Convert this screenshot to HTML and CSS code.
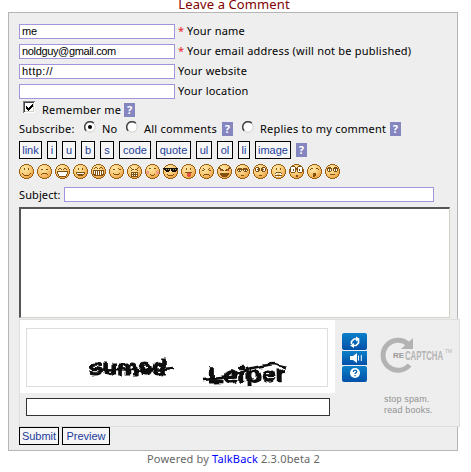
FILE: index.html
```html
<!DOCTYPE html>
<html lang="en">
<head>
<meta charset="utf-8">
<title>Leave a Comment</title>
<link rel="stylesheet" href="styles.css">
</head>
<body>
<svg class="defs" width="0" height="0">
  <defs>
    <radialGradient id="skin" cx=".38" cy=".3" r=".75"><stop offset="0" stop-color="#ffe9aa"/><stop offset=".5" stop-color="#f9cc78"/><stop offset="1" stop-color="#e99a3c"/></radialGradient>
    <linearGradient id="blue" x2="0" y2="1"><stop offset="0" stop-color="#0b80c8"/><stop offset="1" stop-color="#0350a8"/></linearGradient>
    <filter id="rough" x="-5%" y="-20%" width="110%" height="140%"><feTurbulence type="fractalNoise" baseFrequency=".13" numOctaves="1" seed="4"/><feDisplacementMap in="SourceGraphic" scale="6" xChannelSelector="R" yChannelSelector="G"/></filter>
    <symbol id="face" viewBox="0 0 15 15"><path fill="url(#skin)" d="M5 0h5v1h2v1h1v1h1v2h1v5h-1v2h-1v1h-1v1h-2v1H5v-1H3v-1H2v-1H1v-2H0V5h1V3h1V2h1V1h2z"/><path fill="#9a5f12" d="M5 0h5v1H5zM3 1h2v1H3zM10 1h2v1h-2zM2 2h1v1H2zM12 2h1v1h-1zM1 3h1v2H1zM13 3h1v2h-1zM0 5h1v5H0zM14 5h1v5h-1zM1 10h1v2H1zM13 10h1v2h-1zM2 12h1v1H2zM12 12h1v1h-1zM3 13h2v1H3zM10 13h2v1h-2zM5 14h5v1H5z"/></symbol>
  </defs>
</svg>
<h1 class="title">Leave a Comment</h1>
<form class="comment">
  <label class="row"><input class="field" type="text" value="me"><span class="req">*</span><span>Your name</span></label>
  <label class="row"><input class="field tight" type="text" value="noldguy@gmail.com"><span class="req">*</span><span>Your email address (will not be published)</span></label>
  <label class="row"><input class="field wide" type="text" value="http://"><span>Your website</span></label>
  <label class="row"><input class="field" type="text"><span>Your location</span></label>
  <div class="row remember">
    <svg class="check" width="12" height="12" shape-rendering="crispEdges"><path fill="#fff" d="M0 0h12v12H0z"/><path fill="#808080" d="M0 0h12v1H1v11H0z"/><path fill="#404040" d="M1 1h10v1H2v9H1z"/><path fill="#d4d0c8" d="M10 2h1v9H2v-1h8z"/><path fill="#000" d="M3 5h1v1h1v1h1V6h1V5h1V4h1V3h1v3H9v1H8v1H7v1H6v1H5V9H4V8H3z"/></svg>
    <span>Remember me</span><b class="help">?</b>
  </div>
  <div class="row subscribe">
    <span class="sub">Subscribe:</span>
    <svg class="radio" width="12" height="12"><circle cx="6" cy="6" r="5.2" fill="#fff" stroke="#d4d0c8"/><path d="M2.2 9.8A5.3 5.3 0 0 1 9.8 2.2" fill="none" stroke="#444" stroke-width="1.5"/><circle cx="6" cy="6" r="2" fill="#000"/></svg>
    <span class="no">No</span>
    <svg class="radio" width="12" height="12"><circle cx="6" cy="6" r="5.2" fill="#fff" stroke="#d4d0c8"/><path d="M2.2 9.8A5.3 5.3 0 0 1 9.8 2.2" fill="none" stroke="#444" stroke-width="1.5"/></svg>
    <span class="all">All comments</span><b class="help">?</b>
    <svg class="radio last" width="12" height="12"><circle cx="6" cy="6" r="5.2" fill="#fff" stroke="#d4d0c8"/><path d="M2.2 9.8A5.3 5.3 0 0 1 9.8 2.2" fill="none" stroke="#444" stroke-width="1.5"/></svg>
    <span class="replies">Replies to my comment</span><b class="help">?</b>
  </div>
  <div class="tools">
    <button class="btn w23" type="button">link</button><button class="btn w10" type="button">i</button><button class="btn w14" type="button">u</button><button class="btn w14" type="button">b</button><button class="btn w14" type="button">s</button><button class="btn w32" type="button">code</button><button class="btn w35" type="button">quote</button><button class="btn w16" type="button">ul</button><button class="btn w16" type="button">ol</button><button class="btn w12" type="button">li</button><button class="btn w36" type="button">image</button><b class="help">?</b>
  </div>
  <div class="smileys">
    <svg><use href="#face"/><path d="M5 4h1v2H5zM9 4h1v2H9zM3 9h1v1H3zM11 9h1v1h-1zM4 10h1v1H4zM10 10h1v1h-1zM5 11h5v1H5z"/></svg>
    <svg><use href="#face"/><path d="M4 5h2v1H4zM9 5h2v1H9zM5 9h5v1H5zM4 10h1v1H4zM10 10h1v1h-1z"/></svg>
    <svg><use href="#face"/><path d="M4 4h2v1H4zM9 4h2v1H9zM3 5h1v1H3zM6 5h1v1H6zM8 5h1v1H8zM11 5h1v1h-1zM2 7h11v3h-1v2h-1v1H4v-1H3v-2H2z"/><path class="w" d="M3 8h9v2h-1v2H4v-2H3z"/></svg>
    <svg><use href="#face"/><path d="M5 4h1v2H5zM9 4h1v2H9zM3 8h9v2h-1v1h-1v1H5v-1H4v-1H3z"/><path class="w" d="M4 9h7v1H4z"/></svg>
    <svg><use href="#face"/><path d="M4 3h2v1H4zM9 3h2v1H9zM3 4h1v1H3zM6 4h1v1H6zM8 4h1v1H8zM11 4h1v1h-1zM2 6h11v5h-1v1H3v-1H2z"/><path class="w" d="M3 7h1v3H3zM5 7h1v4H5zM7 7h1v4H7zM9 7h1v4H9zM11 7h1v3h-1z"/></svg>
    <svg><use href="#face"/><path d="M4 5h2v1H4zM9 4h1v1H9zM10 5h2v1h-2zM4 9h1v1H4zM10 9h1v1h-1zM5 10h5v1H5z"/></svg>
    <svg><use href="#face"/><path d="M3 3h1v1H3zM4 4h1v1H4zM5 5h2v1H5zM8 5h2v1H8zM10 4h1v1h-1zM11 3h1v1h-1zM4 6h1v1H4zM10 6h1v1h-1zM4 8h7v5H4z"/><path class="w" d="M5 9h1v1H5zM7 9h1v1H7zM9 9h1v1H9zM5 11h1v1H5zM7 11h1v1H7zM9 11h1v1H9z"/></svg>
    <svg><use href="#face"/><path class="blush" d="M1 7h3v3H1zM11 7h3v3h-3z"/><path d="M4 4h2v1H4zM9 4h2v1H9zM5 10h1v1H5zM9 10h1v1H9zM6 11h3v1H6z"/></svg>
    <svg><use href="#face"/><path class="shades" d="M0 4h15v1h-1v2h-1v1H9V7H8V5H7v2H6v1H3V7H2V6H1V5H0z"/><path class="glint" d="M3 5h1v1H3zM5 5h1v1H5zM10 5h1v1h-1zM12 5h1v1h-1z"/><path d="M4 10h1v1H4zM10 10h1v1h-1zM5 11h5v1H5z"/></svg>
    <svg><use href="#face"/><path d="M5 4h1v2H5zM9 4h1v2H9zM4 8h7v1H4z"/><path class="tongue" d="M6 9h4v3H9v1H7v-1H6z"/></svg>
    <svg><use href="#face"/><path d="M3 6h2v1H3zM5 5h1v1H5zM4 4h1v1H4zM9 5h1v1H9zM10 4h1v1h-1zM10 6h2v1h-2zM5 10h5v1H5zM4 11h1v1H4zM10 11h1v1h-1z"/></svg>
    <svg><use href="#face"/><path class="tongue" d="M3 5h2v1h1v1H3zM10 5h2v2H9V6h1z"/><path d="M2 3h1v1h1v1h2v1h1v1H5V6H3V5H2zM12 3h1v2h-1v1h-2v1H8V6h1V5h2V4h1zM3 9h9v2h-1v1h-1v1H5v-1H4v-1H3z"/></svg>
    <svg><use href="#face"/><path d="M3 4h4v1h1V4h4v1h1v2h-1v1H9V7H8V6H7v1H6v1H3V7H2V5h1z"/><path class="w" d="M3 6h1v1H3zM5 6h1v1H5zM9 6h1v1H9zM11 6h1v1h-1z"/><path d="M6 11h3v1H6z"/></svg>
    <svg><use href="#face"/><path d="M3 3h3v1h1v3H6v1H3V7H2V4h1zM9 3h3v1h1v3h-1v1H9V7H8V4h1z"/><path class="w" d="M3 4h2v1H4v1h1v1H3zM10 4h2v3h-2V6h1V5h-1z"/><path d="M6 11h3v1H6z"/></svg>
    <svg><use href="#face"/><path d="M5 4h1v2H5zM9 4h1v2H9zM5 8h5v1H5zM4 9h1v1H4zM10 9h1v1h-1zM4 11h7v1H4z"/><path class="w" d="M5 9h2v1H5zM8 9h2v1H8zM4 10h2v1H4zM9 10h2v1H9zM5 12h2v1H5zM8 12h2v1H8z"/></svg>
    <svg><use href="#face"/><path d="M2 2h4v1h1v1h1V3h1V2h4v1h1v5h-1v1H9V8H8V6H7v2H6v1H2V8H1V3h1z"/><path class="w" d="M2 3h4v5H2zM9 3h4v5H9z"/><path d="M4 5h1v2H4zM10 5h1v2h-1zM7 11h2v2H7z"/></svg>
    <svg><use href="#face"/><path d="M3 5h1V4h2v1H4v1H3zM9 4h2v1h1v1h-1V5H9zM6 9h3v3H8v1H6z"/></svg>
    <svg><use href="#face"/><path d="M3 3h3v1h1v3H6v1H3V7H2V4h1zM9 3h3v1h1v3h-1v1H9V7H8V4h1z"/><path class="w" d="M3 5h1v2H3zM5 5h1v2H5zM9 5h1v2H9zM11 5h1v2h-1z"/><path d="M5 10h5v1H5z"/></svg>
  </div>
  <div class="subject"><span>Subject:</span><input class="field" type="text"></div>
  <textarea class="body"></textarea>
  <div class="captcha">
    <div class="challenge">
      <svg class="words" width="302" height="59">
        <g class="word"><text x="62" y="46" textLength="78" lengthAdjust="spacingAndGlyphs">sumed</text><path d="M66 41L92 40 118 42 146 39"/>
        <text x="181" y="54" textLength="78" lengthAdjust="spacingAndGlyphs" transform="rotate(-1 181 53)">Leiper</text><path d="M176 51L202 48 220 40 246 35 259 38"/></g>
      </svg>
    </div>
    <svg class="controls" width="25" height="49"><rect width="25" height="17" rx="2" fill="url(#blue)"/><rect y="18" width="25" height="14" fill="url(#blue)"/><rect y="33" width="25" height="16" rx="2" fill="url(#blue)"/>
      <g fill="none" stroke="#fff" stroke-width="1.7"><path d="M9.5 11V8.500L12 6h3M16.500 7v3L14 12.500h-3"/><path d="M16.500 22.500v5M19.300 22v6" stroke-width="1"/></g>
      <path fill="#fff" d="M14 3.500L18 6l-4 2.500zM12 10v5L8 12.500zM8 23h3l4-3v10l-4-3H8z"/><circle cx="13" cy="40" r="5" fill="#fff"/><path d="M11.300 39c0-2.500 3.500-2.400 3.400-.3 0 1-1.600 1.100-1.600 2.300m0 1v1.200" fill="none" stroke="#0761b4" stroke-width="1.300"/></svg>
    <div class="brand">
      <svg width="78" height="40"><path fill="none" stroke="#b3b3b3" stroke-width="5" d="M28 9A15 15 0 1 0 29.500 30"/><path fill="#b3b3b3" d="M33 3v11H21z"/><path fill="#eee" d="M12 15h12v10H12z"/><text class="re" x="13" y="23" textLength="11" lengthAdjust="spacingAndGlyphs">RE</text><text class="cap" x="25" y="25" textLength="38" lengthAdjust="spacingAndGlyphs">CAPTCHA</text><text class="tm" x="65" y="18" textLength="7" lengthAdjust="spacingAndGlyphs">TM</text></svg>
      <p>stop spam.<br>read books.</p>
    </div>
    <input class="answer" type="text">
  </div>
  <div class="actions"><button class="btn w40" type="button">Submit</button><button class="btn w48" type="button">Preview</button></div>
</form>
<p class="footer">Powered by <a>TalkBack</a> 2.3.0beta 2</p>
</body>
</html>
```

FILE: styles.css
```css
* { box-sizing: border-box; }
body { margin: 0; width: 471px; height: 472px; overflow: hidden; background: #fff; color: #000; font: 11px/14px "Noto Sans", sans-serif; letter-spacing: .22px; }
.defs { display: block; }
.title { margin: 0; height: 12px; padding-right: 3px; font-size: 13px; line-height: 9px; font-weight: 400; text-align: center; color: #800000; letter-spacing: .1px; }
.comment { display: flex; flex-direction: column; align-items: flex-start; width: 450px; height: 439px; margin-left: 8px; padding: 8px 0 0 10px; border: 1px solid #b5b5b5; background: #eee; }
span, .footer { white-space: nowrap; }
.row { display: flex; align-items: center; height: 20px; }
.field { width: 156px; height: 15px; margin: 0 3px 0 0; padding: 0 2px; border: 1px solid #a394dc; border-radius: 0; background: #fff; color: #000; font: 11px/13px "Liberation Sans", sans-serif; letter-spacing: -.2px; outline: 0; }
.tight { letter-spacing: -.35px; }
.wide { letter-spacing: .5px; }
.req { width: 9px; color: #e8232a; }
.help { flex: none; width: 11px; height: 14px; background: #8585c0; color: #fff; font: bold 11px/14px "Noto Sans", sans-serif; text-align: center; }
.remember { height: 18px; padding-left: 4px; }
.check { margin: -6px 7px 0 0; }
.remember .help { margin-left: 3px; }
.radio { margin: -5px 0 0; }
.sub { width: 65px; }
.no { width: 24px; margin-left: 6px; }
.all { width: 75px; margin-left: 6px; }
.all + .help { margin-left: 3px; }
.last { margin-left: 9px; }
.replies { width: 128px; margin-left: 6px; }
.replies + .help { margin-left: 2px; }
.tools { display: flex; align-items: center; gap: 5px; height: 18px; margin-top: 2px; }
.btn { flex: none; height: 18px; margin: 0; padding: 0; border: 1px solid #000; border-radius: 0; background: #f6f6f6; color: #1c3c9c; font: 11px/16px "Liberation Sans", sans-serif; text-align: center; white-space: nowrap; }
.w10 { width: 10px; } .w12 { width: 12px; } .w14 { width: 14px; } .w16 { width: 16px; } .w23 { width: 23px; } .w32 { width: 32px; } .w35 { width: 35px; } .w36 { width: 36px; } .w40 { width: 40px; } .w48 { width: 48px; }
.smileys { display: flex; gap: 3px; margin-top: 5px; }
.smileys svg { width: 15px; height: 15px; shape-rendering: crispEdges; fill: #845010; }
.smileys .w { fill: #fff; }
.blush { fill: #f29a88; }
.shades { fill: #171208; }
.glint { fill: #b99b62; }
.tongue { fill: #e34f43; }
.subject { display: flex; align-items: center; height: 15px; margin-top: 8px; }
.subject span { width: 45px; letter-spacing: .1px; }
.subject .field { width: 370px; margin: 0; }
.body { display: block; flex: none; width: 431px; height: 111px; margin: 5px 0 0; padding: 2px; border: solid; border-width: 2px 1px 1px 2px; border-color: #555 #d4d0c8 #d4d0c8 #555; border-radius: 0; background: #fff; resize: none; outline: 0; }
.captcha { display: grid; grid-template: 73px 33px / 315px 25px 1fr; column-gap: 7px; flex: none; width: 441px; height: 108px; margin-top: 1px; border: 1px solid #ddd; background: #eee; }
.challenge { padding: 8px 0 0 6px; margin-right: 0; background: #fff; }
.words { display: block; border: 1px solid #ddd; }
.word { fill: #080808; stroke: #080808; stroke-width: 1.2; font: bold 22px "Liberation Sans", sans-serif; filter: url(#rough); }
.word path { fill: none; stroke-width: 2.5; }
.controls { margin-top: 13px; }
.brand { margin: 15px 0 0 6px; width: 78px; color: #929292; font: 9px/11px "Liberation Sans", sans-serif; letter-spacing: .15px; }
.brand svg { display: block; }
.brand p { margin: 19px 0 0 4px; white-space: nowrap; }
.re { font: bold 8px "Liberation Sans", sans-serif; letter-spacing: 0; fill: #999; }
.cap { font: bold 13px "Liberation Sans", sans-serif; letter-spacing: 0; fill: #b3b3b3; }
.tm { font: 5px "Liberation Sans", sans-serif; letter-spacing: 0; fill: #b3b3b3; }
.answer { grid-column: 1; grid-row: 2; width: 304px; height: 18px; margin: 5px 0 0 6px; padding: 0 3px; border: 1px solid #333; border-radius: 0; background: #fff; }
.actions { display: flex; gap: 3px; }
.footer { margin: 1px 0 0; padding-right: 4px; text-align: center; color: #666; letter-spacing: .17px; }
.footer a { color: #00f; }
```
